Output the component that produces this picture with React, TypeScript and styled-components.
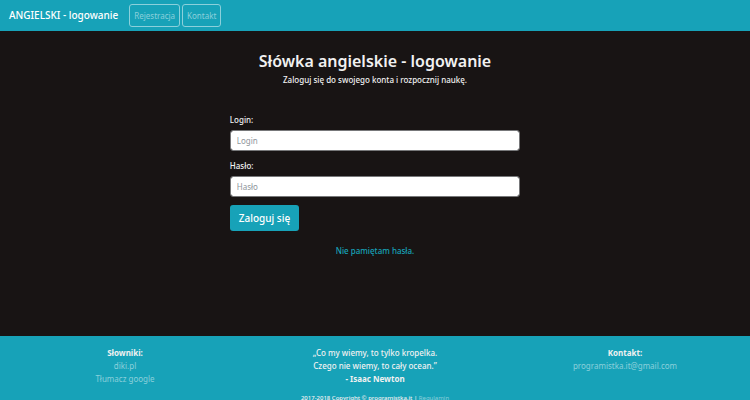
import React from 'react';
import styled, { createGlobalStyle } from 'styled-components';

const GlobalStyle = createGlobalStyle`
  *, *::before, *::after { box-sizing: border-box; }
  html { scrollbar-width: none; }
  body {
    margin: 0;
    background: #181414;
    color: #f1f1f1;
    font-family: 'Segoe UI', 'Noto Sans', 'Open Sans', sans-serif;
    font-size: 8px;
    font-weight: 500;
    line-height: 13px;
  }
`;

const Page = styled.div`
  display: flex;
  flex-direction: column;
  min-height: 100vh;
`;

const Navbar = styled.nav`
  display: flex;
  align-items: center;
  gap: 11px;
  padding: 4px 9px;
  background: #17a2b8;
`;

const Brand = styled.a`
  color: #ffffff;
  font-size: 10px;
  font-weight: 500;
  text-decoration: none;
`;

const NavLinks = styled.div`
  display: flex;
  gap: 2px;
`;

const NavButton = styled.button`
  height: 23px;
  padding: 0 4px;
  border: 1px solid #8bd0db;
  border-radius: 3px;
  background: transparent;
  color: #8bd0db;
  font: inherit;
  font-weight: 400;
  cursor: pointer;
`;

const Main = styled.main`
  flex: 1 0 auto;
  padding: 18px 12px 79px;
`;

const Heading = styled.header`
  text-align: center;
`;

const Title = styled.h1`
  margin: 0;
  font-size: 16px;
  font-weight: 600;
  line-height: 24px;
`;

const Lead = styled.p`
  margin: 0;
`;

const LoginForm = styled.form`
  display: flex;
  flex-direction: column;
  align-items: flex-start;
  width: 40%;
  min-width: 290px;
  margin: 27px auto 0;
`;

const Field = styled.div`
  width: 100%;
  margin-bottom: 9px;
`;

const Label = styled.label`
  display: block;
  margin-bottom: 4px;
`;

const TextInput = styled.input`
  display: block;
  width: 100%;
  height: 21px;
  margin-bottom: -1px;
  padding: 0 6px;
  border: 1px solid #77787a;
  border-radius: 3px;
  background: #ffffff;
  background-clip: padding-box;
  color: #495057;
  font: inherit;
  font-weight: 400;

  &::placeholder { color: #8e959b; opacity: 1; }
`;

const SubmitButton = styled.button`
  height: 26px;
  padding: 0 9px;
  border: 0;
  border-radius: 3px;
  background: #17a2b8;
  color: #ffffff;
  font: inherit;
  font-size: 10px;
  cursor: pointer;
`;

const Reminder = styled.p`
  margin: 13px 0 0;
  text-align: center;
`;

const AccentLink = styled.a`
  color: #17a2b8;
  text-decoration: none;
`;

const Footer = styled.footer`
  padding: 10px 0;
  background: #17a2b8;
  text-align: center;
`;

const FooterColumns = styled.div`
  display: grid;
  grid-template-columns: repeat(3, 1fr);
`;

const FooterColumn = styled.div`
  display: flex;
  flex-direction: column;
  align-items: center;
`;

const Quote = styled.blockquote`
  margin: 0;
`;

const FooterLink = styled.a`
  color: #8bd0db;
  font-weight: 400;
  text-decoration: none;
`;

const Copyright = styled.p`
  margin: 8px 0 0;
  font-size: 6px;
  line-height: 10px;
`;

export default function App() {
  return (
    <>
      <GlobalStyle />
      <Page>
        <Navbar>
          <Brand href="#">ANGIELSKI - logowanie</Brand>
          <NavLinks>
            <NavButton type="button">Rejestracja</NavButton>
            <NavButton type="button">Kontakt</NavButton>
          </NavLinks>
        </Navbar>
        <Main>
          <Heading>
            <Title>Słówka angielskie - logowanie</Title>
            <Lead>Zaloguj się do swojego konta i rozpocznij naukę.</Lead>
          </Heading>
          <LoginForm onSubmit={(event) => event.preventDefault()}>
            <Field>
              <Label htmlFor="login">Login:</Label>
              <TextInput id="login" type="text" placeholder="Login" />
            </Field>
            <Field>
              <Label htmlFor="password">Hasło:</Label>
              <TextInput id="password" type="password" placeholder="Hasło" />
            </Field>
            <SubmitButton type="submit">Zaloguj się</SubmitButton>
          </LoginForm>
          <Reminder>
            <AccentLink href="#">Nie pamiętam hasła.</AccentLink>
          </Reminder>
        </Main>
        <Footer>
          <FooterColumns>
            <FooterColumn>
              <strong>Słowniki:</strong>
              <FooterLink href="#">diki.pl</FooterLink>
              <FooterLink href="#">Tłumacz google</FooterLink>
            </FooterColumn>
            <Quote>
              „Co my wiemy, to tylko kropelka.
              <br />
              Czego nie wiemy, to cały ocean.”
              <br />
              <strong>- Isaac Newton</strong>
            </Quote>
            <FooterColumn>
              <strong>Kontakt:</strong>
              <FooterLink href="mailto:programistka.it@gmail.com">programistka.it@gmail.com</FooterLink>
            </FooterColumn>
          </FooterColumns>
          <Copyright>
            2017-2018 Copyright © programistka.it | <FooterLink href="#">Regulamin</FooterLink>
          </Copyright>
        </Footer>
      </Page>
    </>
  );
}
